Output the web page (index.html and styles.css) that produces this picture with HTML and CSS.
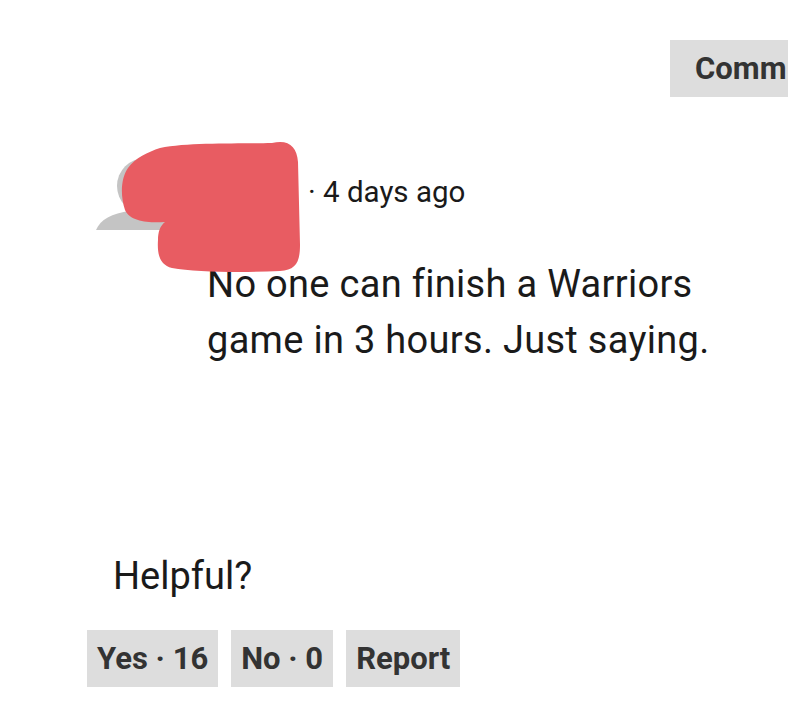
FILE: index.html
```html
<!DOCTYPE html>
<html lang="en">
<head>
<meta charset="utf-8">
<title>Review</title>
<link rel="stylesheet" href="styles.css">
</head>
<body>
<div class="page">
  <div class="topbar">
    <button class="btn comment-btn">Comm</button>
  </div>
  <div class="review">
    <div class="meta">
      <div class="avatar">
        <svg class="silhouette" width="100" height="100" viewBox="96 140 100 100">
          <circle cx="145" cy="186" r="28" fill="#c4c4c4"/>
          <path d="M96 230 C100 220 112 213 130 211 L190 211 L190 230 Z" fill="#c4c4c4"/>
        </svg>
        <svg class="scribble" width="190" height="135" viewBox="117 140 190 135">
          <path d="M160 148 C190 142 240 144 272 143 C288 139 297 146 298 162 L300 245 C300 262 296 270 280 271 C240 273 195 272 172 268 C160 265 157 255 158 240 C158 232 160 226 165 222 C150 223 130 222 125 210 C120 195 121 178 128 168 C135 158 148 152 160 148 Z" fill="#e85c62"/>
        </svg>
      </div>
      <span class="time">· 4 days ago</span>
    </div>
    <p class="text">No one can finish a Warriors game in 3 hours. Just saying.</p>
  </div>
  <div class="helpful">
    <p class="helpful-label">Helpful?</p>
    <div class="actions">
      <button class="btn">Yes · 16</button>
      <button class="btn">No · 0</button>
      <button class="btn">Report</button>
    </div>
  </div>
</div>
</body>
</html>
```

FILE: styles.css
```css
* { box-sizing: border-box; }
html, body {
  margin: 0;
  padding: 0;
  background: #ffffff;
}
body {
  font-family: Roboto, "Liberation Sans", sans-serif;
  color: #1a1a1a;
  width: 800px;
  height: 706px;
  overflow: hidden;
}
.page {
  width: 788px;
  overflow: hidden;
  padding-top: 40px;
}
.topbar {
  display: flex;
  padding-left: 670px;
}
.btn {
  flex-shrink: 0;
  white-space: nowrap;
  font-family: Roboto, "Liberation Sans", sans-serif;
  font-weight: 700;
  font-size: 31px;
  color: #333333;
  background: #dddddd;
  border: none;
  border-radius: 0;
  height: 57px;
  padding: 0 10px;
  line-height: 57px;
}
.comment-btn {
  width: 118px;
  padding: 0 0 0 25px;
  text-align: left;
}
.review {
  margin-top: 75px;
}
.meta {
  display: flex;
  align-items: flex-start;
  height: 40px;
  position: relative;
}
.avatar {
  position: relative;
  width: 308px;
  height: 40px;
  flex-shrink: 0;
}
.silhouette {
  position: absolute;
  left: 96px;
  top: -32px;
}
.scribble {
  position: absolute;
  left: 117px;
  top: -32px;
}
.time {
  font-size: 29.5px;
  line-height: 40px;
  color: #1a1a1a;
}
.text {
  margin: 44px 0 0 207px;
  width: 530px;
  font-size: 38px;
  line-height: 56px;
  letter-spacing: 0.3px;
  color: #1a1a1a;
}
.helpful {
  margin-top: 183px;
}
.helpful-label {
  margin: 0 0 0 113px;
  font-size: 38px;
  line-height: 50px;
  color: #1a1a1a;
}
.actions {
  display: flex;
  gap: 13px;
  margin-left: 87px;
  margin-top: 29px;
}
```
